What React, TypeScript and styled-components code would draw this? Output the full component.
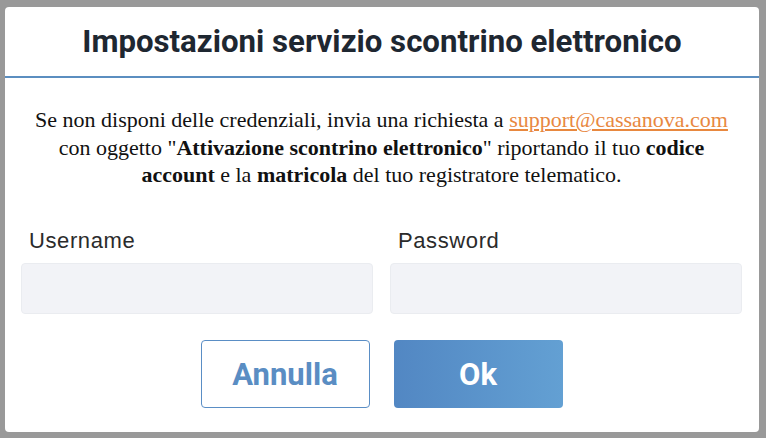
import React from "react";
import styled, { createGlobalStyle } from "styled-components";

const Global = createGlobalStyle`
  html, body { margin: 0; padding: 0; background: #999999; }
  body { width: 766px; height: 438px; overflow: hidden; }
`;

const Backdrop = styled.div`
  width: 766px;
  height: 438px;
  box-sizing: border-box;
  padding: 7px 7px 6px 5px;
  background: #999999;
`;

const Dialog = styled.div`
  width: 754px;
  height: 425px;
  background: #ffffff;
  border-radius: 4px;
  display: flex;
  flex-direction: column;
  overflow: hidden;
`;

const Header = styled.div`
  height: 69px;
  flex-shrink: 0;
  border-bottom: 2px solid #5b8ec0;
  display: flex;
  align-items: center;
  justify-content: center;
`;

const Title = styled.h1`
  margin: 0;
  font-family: Roboto, "Liberation Sans", sans-serif;
  font-weight: 700;
  font-size: 31.2px;
  color: #1e2731;
  white-space: nowrap;
`;

const Body = styled.div`
  padding: 28px 17px 0 16px;
  display: flex;
  flex-direction: column;
`;

const Message = styled.p`
  margin: 0;
  font-family: "Liberation Serif", "Times New Roman", serif;
  font-size: 22px;
  line-height: 27.5px;
  color: #111111;
  text-align: center;
  white-space: nowrap;
`;

const Mail = styled.a`
  color: #e8883f;
  text-decoration: underline;
`;

const Fields = styled.div`
  margin-top: 39.5px;
  display: grid;
  grid-template-columns: 1fr 1fr;
  column-gap: 17px;
`;

const Field = styled.div`
  display: flex;
  flex-direction: column;
`;

const Label = styled.label`
  font-family: "Liberation Sans", Arial, sans-serif;
  font-size: 22px;
  letter-spacing: 0.6px;
  line-height: 25px;
  color: #2b2b2b;
  padding-left: 8px;
  margin-bottom: 10px;
`;

const Input = styled.input`
  box-sizing: border-box;
  height: 51px;
  width: 100%;
  background: #f2f3f7;
  border: 1px solid #eaecf0;
  border-radius: 4px;
  outline: none;
  font-size: 16px;
`;

const Actions = styled.div`
  margin-top: 26px;
  display: flex;
  justify-content: center;
  gap: 24px;
`;

const Button = styled.button<{ $primary?: boolean }>`
  box-sizing: border-box;
  width: 169px;
  height: 68px;
  padding: 0;
  border-radius: 4px;
  font-family: Roboto, "Liberation Sans", sans-serif;
  font-weight: 700;
  font-size: 31px;
  cursor: pointer;
  border: ${(p) => (p.$primary ? "none" : "1.5px solid #5a8ec5")};
  background: ${(p) =>
    p.$primary ? "linear-gradient(90deg, #5287c3 0%, #63a0d3 100%)" : "#ffffff"};
  color: ${(p) => (p.$primary ? "#ffffff" : "#5a8dc3")};
`;

export default function App() {
  return (
    <>
      <Global />
      <Backdrop>
        <Dialog>
          <Header>
            <Title>Impostazioni servizio scontrino elettronico</Title>
          </Header>
          <Body>
            <Message>
              Se non disponi delle credenziali, invia una richiesta a{" "}
              <Mail href="#">support@cassanova.com</Mail>
              <br />
              con oggetto "<b>Attivazione scontrino elettronico</b>" riportando
              il tuo <b>codice</b>
              <br />
              <b>account</b> e la <b>matricola</b> del tuo registratore
              telematico.
            </Message>
            <Fields>
              <Field>
                <Label>Username</Label>
                <Input type="text" />
              </Field>
              <Field>
                <Label>Password</Label>
                <Input type="password" />
              </Field>
            </Fields>
            <Actions>
              <Button>Annulla</Button>
              <Button $primary>Ok</Button>
            </Actions>
          </Body>
        </Dialog>
      </Backdrop>
    </>
  );
}
